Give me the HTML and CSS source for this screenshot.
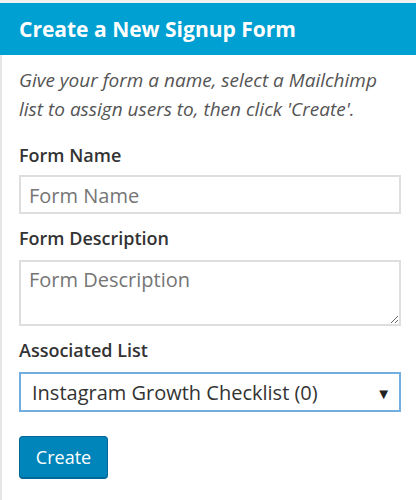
FILE: index.html
```html
<!DOCTYPE html>
<html>
<head>
<meta charset="utf-8">
<link rel="stylesheet" href="styles.css">
</head>
<body>
<div class="panel">
  <h2 class="panel-title">Create a New Signup Form</h2>
  <div class="panel-body">
    <p class="intro">Give your form a name, select a Mailchimp list to assign users to, then click 'Create'.</p>
    <label class="field-label label-first">Form Name</label>
    <input class="text-input" type="text" placeholder="Form Name">
    <label class="field-label">Form Description</label>
    <textarea class="text-area" placeholder="Form Description"></textarea>
    <label class="field-label">Associated List</label>
    <div class="select-box">
      <span class="select-value">Instagram Growth Checklist (0)</span>
      <span class="select-arrow">▼</span>
    </div>
    <button class="btn-create">Create</button>
  </div>
</div>
</body>
</html>
```
FILE: styles.css
```css
html, body {
  margin: 0;
  padding: 0;
}
body {
  background: #f1f1f1;
  font-family: "Open Sans", "Noto Sans", sans-serif;
  padding-top: 3px;
  height: 500px;
  box-sizing: border-box;
  overflow: hidden;
}
.panel {
  background: #fff;
  height: 100%;
  display: flex;
  flex-direction: column;
}
.panel-title {
  margin: 0;
  background: #00a0d2;
  color: #fff;
  font-size: 21px;
  font-weight: 700;
  height: 52px;
  line-height: 52px;
  padding: 0 19px;
  box-sizing: border-box;
  flex: none;
}
.panel-body {
  flex: 1;
  border-left: 2px solid #e6e6e6;
  padding: 11px 15px 0 17px;
  display: flex;
  flex-direction: column;
  align-items: flex-start;
  box-sizing: border-box;
}
.intro {
  margin: 0;
  font-style: italic;
  color: #555;
  font-size: 19px;
  line-height: 29px;
}
.field-label {
  font-weight: 600;
  color: #333;
  font-size: 18px;
  margin-top: 13px;
  line-height: 22px;
}
.label-first {
  margin-top: 20px;
}
.text-input, .text-area {
  width: 100%;
  box-sizing: border-box;
  border: 2px solid #dedede;
  font-family: inherit;
  font-size: 20px;
  color: #333;
  padding: 0 8px;
  outline: none;
  background: #fff;
}
.text-input {
  margin-top: 9px;
  height: 39px;
  padding-top: 2px;
}
.text-area {
  margin-top: 11px;
  height: 66px;
  padding-top: 4px;
  resize: vertical;
}
.text-input::placeholder, .text-area::placeholder {
  color: #757575;
}
.select-box {
  margin-top: 11px;
  width: 100%;
  box-sizing: border-box;
  height: 40px;
  border: 2px solid #72aee0;
  display: flex;
  align-items: center;
  justify-content: space-between;
  padding: 1px 8px 0 11px;
  font-size: 20px;
  color: #333;
}
.select-arrow {
  font-size: 15px;
  color: #222;
}
.btn-create {
  margin-top: 24px;
  background: #0085ba;
  border: 1px solid #006799;
  border-bottom-width: 2px;
  border-radius: 4px;
  color: #fff;
  font-family: inherit;
  font-size: 18px;
  height: 43px;
  width: 89px;
  padding: 0;
}
```
